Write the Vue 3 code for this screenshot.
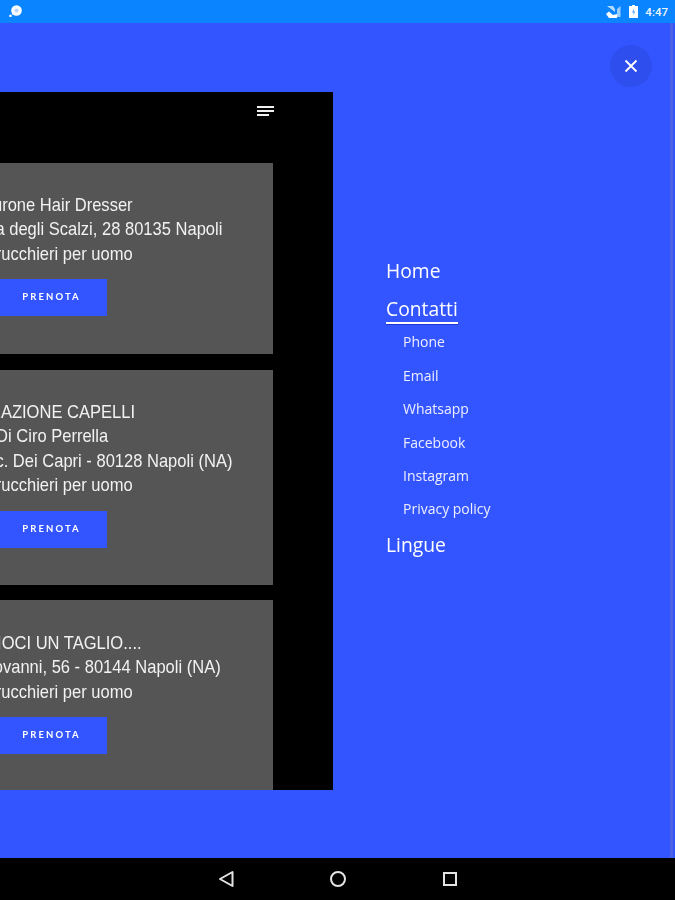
<template>
  <div class="screen">
    <div class="status-bar">
      <svg class="status-app" width="15" height="13" viewBox="0 0 15 13">
        <circle cx="8.5" cy="5.5" r="5.3" fill="#fff" />
        <circle cx="8.5" cy="5.5" r="2" fill="#b9d2ff" />
        <path d="M2.500 9.500a1.300 1.300 0 1 0 .01 0zM4 7h3v2.500H4z" fill="#fff" />
      </svg>
      <div class="status-right">
        <svg width="15" height="13" viewBox="0 0 15 13">
          <path d="M14.500 1v11H11V4z" fill="#fff" opacity="0.6" />
          <path d="M0 9l3-2.500 4 3.500 4-1v4H3z" fill="#fff" />
          <path d="M1 1h6l2 3v3z" fill="#fff" opacity="0.7" />
        </svg>
        <svg width="9" height="13" viewBox="0 0 9 13">
          <path d="M3 0h3v1h3v12H0V1h3z" fill="#fff" />
          <path d="M5 3.500L3 7.500h1.500V10L6.300 6.500H4.800z" fill="#5ea4ff" />
        </svg>
        <span class="clock">4:47</span>
      </div>
    </div>

    <div class="main">
      <div class="preview">
        <div class="preview-head">
          <div class="burger"><i></i><i></i><i class="short"></i></div>
        </div>
        <div v-for="card in cards" :key="card.id" class="card" :class="card.id">
          <div
            v-for="line in card.lines"
            :key="line.text"
            class="card-line"
            :style="{ marginLeft: `${line.shift}px` }"
          >{{ line.text }}</div>
          <a class="book">PRENOTA</a>
        </div>
      </div>

      <nav class="menu">
        <a class="menu-item">Home</a>
        <a class="menu-item active">Contatti</a>
        <ul class="submenu">
          <li v-for="item in contacts" :key="item">{{ item }}</li>
        </ul>
        <a class="menu-item">Lingue</a>
      </nav>

      <div class="scrollbar"></div>
      <button class="close">
        <svg width="14" height="14" viewBox="0 0 14 14">
          <path d="M1.500 1.500l11 11M12.500 1.500l-11 11" stroke="#fff" stroke-width="1.800" fill="none" />
        </svg>
      </button>
    </div>

    <div class="nav-bar">
      <svg width="16" height="18" viewBox="0 0 16 18">
        <path d="M14.500 2v14L2 9z" fill="none" stroke="#e4e4e4" stroke-width="2" stroke-linejoin="round" />
      </svg>
      <svg width="18" height="18" viewBox="0 0 18 18">
        <circle cx="9" cy="9" r="7" fill="none" stroke="#e4e4e4" stroke-width="2" />
      </svg>
      <svg width="16" height="16" viewBox="0 0 16 16">
        <rect x="2" y="2" width="12" height="12" fill="none" stroke="#e4e4e4" stroke-width="2" />
      </svg>
    </div>
  </div>
</template>

<script setup>
// shift: the list is cut by the window's left edge, each line starts at its own offset
const cards = [
  {
    id: 'first',
    lines: [
      { text: 'Maurone Hair Dresser', shift: -13 },
      { text: 'Via degli Scalzi, 28 80135 Napoli', shift: -2 },
      { text: 'Parrucchieri per uomo', shift: -13 }
    ]
  },
  {
    id: 'second',
    lines: [
      { text: 'CREAZIONE CAPELLI', shift: -17 },
      { text: 'Salone Di Ciro Perrella', shift: -43 },
      { text: 'Vic. Dei Capri - 80128 Napoli (NA)', shift: -2 },
      { text: 'Parrucchieri per uomo', shift: -13 }
    ]
  },
  {
    id: 'third',
    lines: [
      { text: 'FACCIOCI UN TAGLIO....', shift: -30 },
      { text: 'S. Giovanni, 56 - 80144 Napoli (NA)', shift: -26 },
      { text: 'Parrucchieri per uomo', shift: -13 }
    ]
  }
];

const contacts = ['Phone', 'Email', 'Whatsapp', 'Facebook', 'Instagram', 'Privacy policy'];
</script>

<style>
html,
body {
  margin: 0;
  overflow: hidden;
}
</style>

<style scoped>
.screen {
  width: 675px;
  height: 900px;
  display: flex;
  flex-direction: column;
  background: #3355ff;
  overflow: hidden;
}

.status-bar {
  height: 23px;
  flex: none;
  display: flex;
  align-items: center;
  justify-content: space-between;
  padding: 0 7px 0 8px;
  background: #0a84ff;
}

.status-right {
  display: flex;
  align-items: center;
  gap: 8px;
}

.clock {
  color: #eef5ff;
  font: 500 11.5px Roboto, sans-serif;
  margin-left: -1px;
}

.main {
  position: relative;
  flex: 1;
  display: flex;
  align-items: flex-start;
  min-height: 0;
}

.preview {
  flex: none;
  width: 350px;
  height: 698px;
  margin: 69px 0 0 -17px;
  padding-right: 60px;
  box-sizing: border-box;
  background: #000;
  overflow: hidden;
  filter: blur(0.45px);
}

.preview-head {
  height: 71px;
  display: flex;
  justify-content: flex-end;
  padding-top: 14px;
  margin-right: -1px;
  box-sizing: border-box;
}

.burger {
  display: flex;
  flex-direction: column;
  gap: 2px;
  width: 17px;
  align-items: flex-start;
}

.burger i {
  display: block;
  width: 17px;
  height: 2px;
  background: #f0f0f0;
}

.burger i.short {
  width: 12px;
}

.card {
  height: 191px;
  margin-bottom: 16px;
  padding-top: 30px;
  box-sizing: border-box;
  background: #555;
}

.card.second {
  height: 215px;
  margin-bottom: 15px;
}

.card.third {
  height: 190px;
  margin-bottom: 0;
  padding-top: 31px;
}

.card-line {
  color: #f2f2f2;
  font: 19px/24.4px "Liberation Sans", sans-serif;
  white-space: nowrap;
  transform: scaleX(0.87);
  transform-origin: left center;
}

.book {
  display: block;
  width: 111px;
  height: 37px;
  margin: 13px 0 0 13px;
  background: #3355ff;
  color: #fff;
  font: 700 9.5px/36px Lato, sans-serif;
  letter-spacing: 2.1px;
  text-align: center;
}

.menu {
  display: flex;
  flex-direction: column;
  align-items: flex-start;
  margin: 234px 0 0 53px;
  color: #fff;
  font-family: "Open Sans", sans-serif;
  filter: blur(0.3px);
}

.menu-item {
  font-size: 19.3px;
  line-height: 27px;
  margin-bottom: 11px;
}

.menu-item.active {
  border-bottom: 2px solid #fff;
  box-shadow: 0 1px 0 #1f35d8;
  margin-bottom: 0;
  line-height: 27px;
}

.submenu {
  list-style: none;
  margin: -6px 0 0 17px;
  padding: 0;
}

.submenu li {
  font-size: 14px;
  font-weight: 500;
  line-height: 19px;
  margin-top: 14.4px;
  color: #eef;
}

.submenu + .menu-item {
  margin-top: 13px;
}

.scrollbar {
  position: absolute;
  top: 0;
  bottom: 0;
  right: 2px;
  width: 3px;
  background: #4b61e6;
}

.close {
  position: absolute;
  top: 22px;
  left: 610px;
  width: 42px;
  height: 42px;
  padding: 0;
  border: 0;
  border-radius: 50%;
  display: flex;
  align-items: center;
  justify-content: center;
  background: #2f4eee;
}

.nav-bar {
  height: 42px;
  flex: none;
  position: relative;
  display: flex;
  align-items: center;
  justify-content: center;
  gap: 95px;
  background: #000;
}
</style>
